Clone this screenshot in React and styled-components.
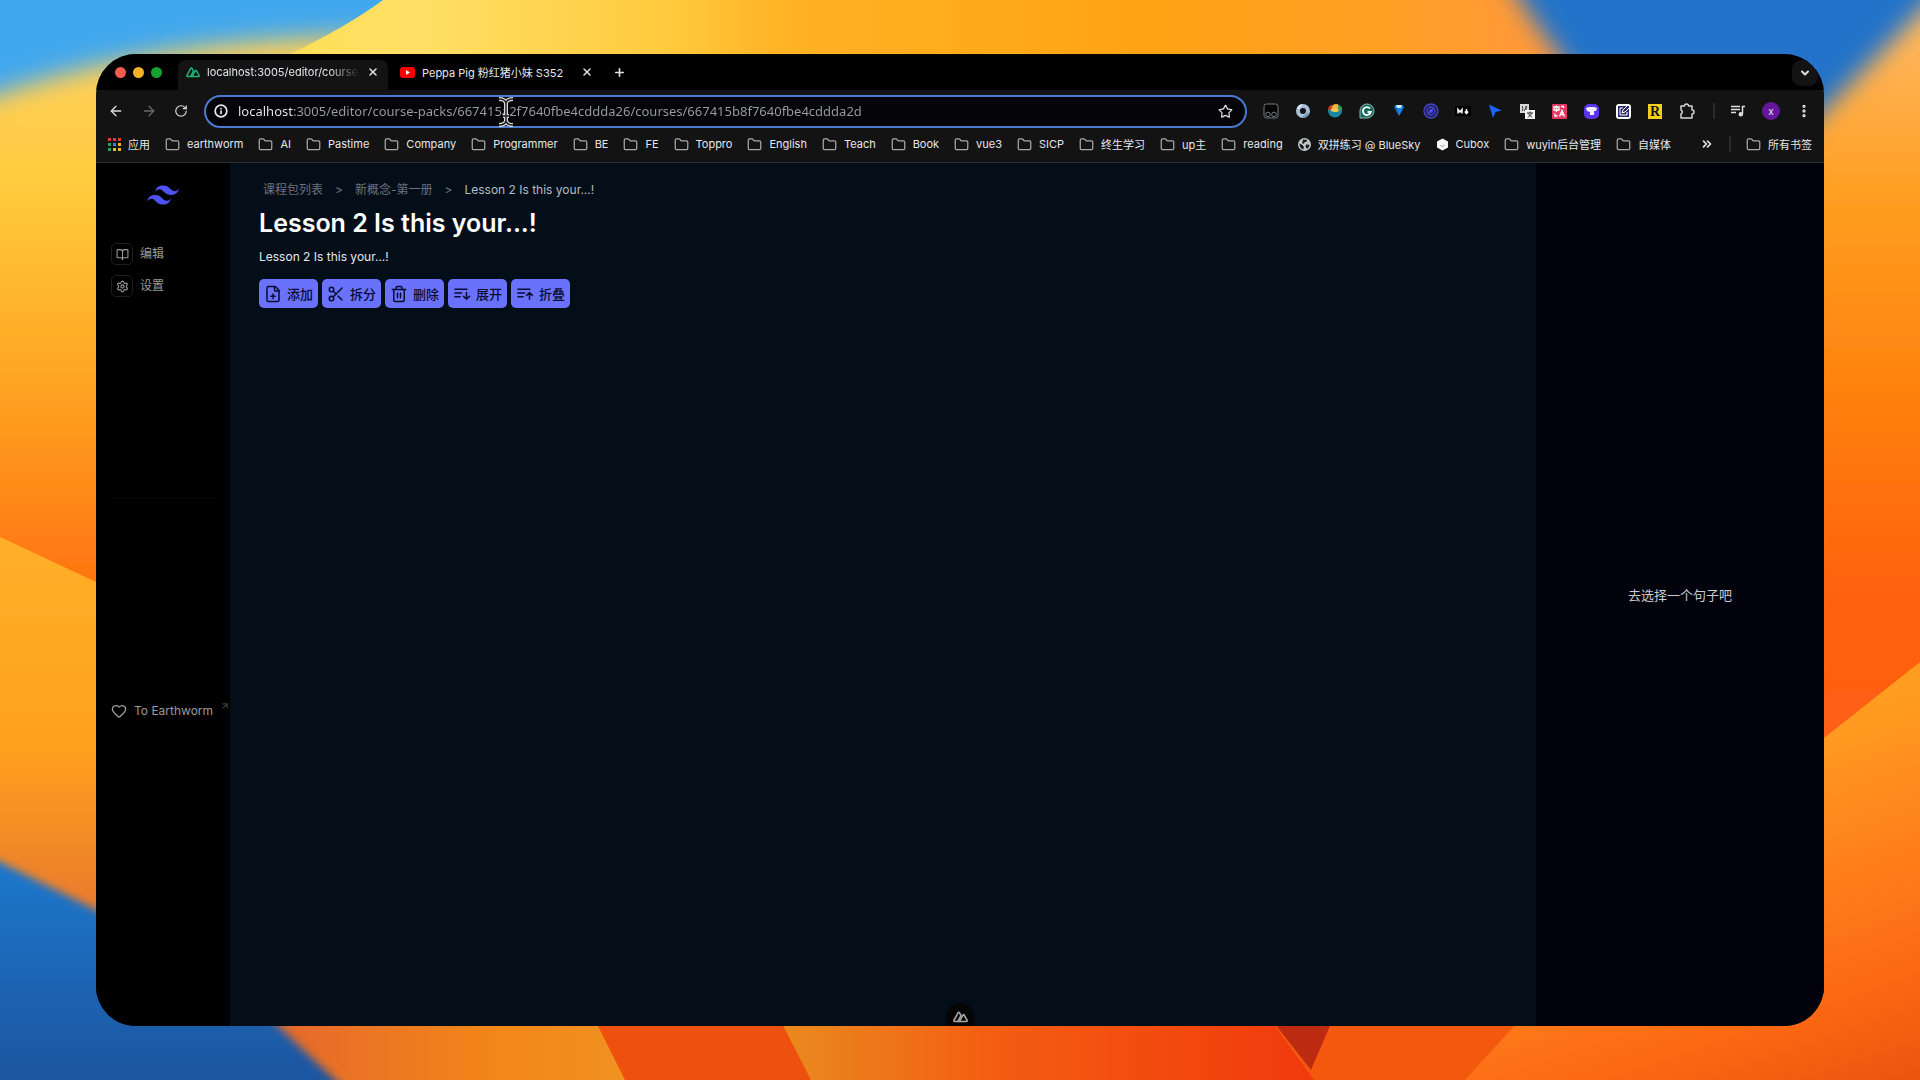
import { useState } from 'react'
import styled, { createGlobalStyle, css } from 'styled-components'
import {
    ArrowLeft,
    ArrowRight,
    ArrowUpRight,
    BookOpen,
    ChevronDown,
    ChevronsRight,
    EllipsisVertical,
    FilePlus,
    Folder,
    Heart,
    Info,
    Plus,
    RotateCw,
    Scissors,
    Settings,
    Star,
    Trash2,
    X,
} from 'lucide-react'

const URL =
    'localhost:3005/editor/course-packs/667415a2f7640fbe4cddda26/courses/667415b8f7640fbe4cddda2d'

const bookmarks = [
    { label: '应用', icon: 'apps' },
    { label: 'earthworm' },
    { label: 'AI' },
    { label: 'Pastime' },
    { label: 'Company' },
    { label: 'Programmer' },
    { label: 'BE' },
    { label: 'FE' },
    { label: 'Toppro' },
    { label: 'English' },
    { label: 'Teach' },
    { label: 'Book' },
    { label: 'vue3' },
    { label: 'SICP' },
    { label: '终生学习' },
    { label: 'up主' },
    { label: 'reading' },
    { label: '双拼练习 @ BlueSky', icon: 'globe' },
    { label: 'Cubox', icon: 'cubox' },
    { label: 'wuyin后台管理' },
    { label: '自媒体' },
]

const NuxtLogo = ({ size = 14, color = '#1fb573' }) => (
    <svg width={size} height={size} viewBox="0 0 14 14" fill="none" stroke={color} strokeWidth="1.5" strokeLinejoin="round" strokeLinecap="round">
        <path d="M5.4 11.6H1.5c-.6 0-.9-.6-.6-1.1L4.8 3.4c.3-.5.9-.5 1.2 0l1.5 2.7-3 5.4" />
        <path d="M5.4 11.6h7.1c.6 0 .9-.6.6-1.1l-2.7-4.9c-.3-.5-.8-.5-1.1 0l-3.1 5.6" />
    </svg>
)

const YoutubeLogo = () => (
    <svg width="15" height="12" viewBox="0 0 15 12">
        <rect width="15" height="11" y="1" rx="3" fill="#f00" />
        <path d="M6 4v5l4-2.500z" fill="#fff" />
    </svg>
)

const TailwindLogo = () => (
    <svg width="32" height="20" viewBox="0 4.800 24 14.400" fill="#4f52f5">
        <path d="M12 4.800c-3.200 0-5.200 1.600-6 4.800 1.200-1.600 2.600-2.200 4.200-1.800.913.228 1.565.89 2.288 1.624C13.666 10.618 15.027 12 18 12c3.200 0 5.200-1.600 6-4.800-1.200 1.600-2.600 2.200-4.200 1.800-.913-.228-1.565-.89-2.288-1.624C16.337 6.182 14.976 4.800 12 4.800zM6 12c-3.200 0-5.200 1.600-6 4.800 1.200-1.600 2.600-2.200 4.200-1.800.913.228 1.565.89 2.288 1.624 1.177 1.194 2.538 2.576 5.512 2.576 3.200 0 5.200-1.600 6-4.800-1.200 1.600-2.600 2.200-4.200 1.800-.913-.228-1.565-.89-2.288-1.624C10.337 13.382 8.976 12 6 12z" />
    </svg>
)

const SortIcon = ({ up }) => (
    <svg width="18" height="18" viewBox="0 0 24 24" fill="none" stroke="currentColor" strokeWidth="2" strokeLinecap="round" strokeLinejoin="round">
        <path d="M2.500 5.500h16M2.500 10.500h9M2.500 15.500h7" />
        <path d={up ? 'M18 19v-9m-4 4 4-4 4 4' : 'M18 10v9m-4-4 4 4 4-4'} />
    </svg>
)

const BookmarkIcon = ({ type }) => {
    if (type === 'apps') {
        const colors = ['#e8392c', '#e8392c', '#e8392c', '#2f9e57', '#3f7fe8', '#f0b429', '#2f9e57', '#f0b429', '#f0b429']
        return (
            <svg width="13" height="13" viewBox="0 0 13 13">
                {colors.map((c, i) => (
                    <rect key={i} x={(i % 3) * 5} y={Math.floor(i / 3) * 5} width="3" height="3" fill={c} />
                ))}
            </svg>
        )
    }
    if (type === 'globe') {
        return (
            <svg width="13" height="13" viewBox="0 0 13 13">
                <circle cx="6.500" cy="6.500" r="6.500" fill="#c3c5c8" />
                <path d="M1.500 5.500l3 1.500 1.500 2-.8 2.500C3 11 1.300 8.500 1.500 5.500zM5 1.500l4 .3-.5 2-2 .5-.5 1.500-2-.5zM8 6.500l3.500.3c-.2 1.800-1.200 3.200-2.500 4L7.500 9z" fill="#1c1c1c" />
            </svg>
        )
    }
    if (type === 'cubox') {
        return (
            <svg width="13" height="13" viewBox="0 0 13 13">
                <path d="M6.500.5l5.500 3v6l-5.500 3-5.500-3v-6z" fill="#f6f6f6" />
                <path d="M4.500 7.500l2 1 2-1.500" stroke="#999" fill="none" />
            </svg>
        )
    }
    return <Folder size={15} strokeWidth={2} color="#a9a9a9" />
}

const extensions = [
    {
        name: 'Tampermonkey',
        art: (
            <g fill="none" stroke="#77797b">
                <rect x="1" y="1" width="14" height="14" rx="2.500" fill="#060606" />
                <circle cx="5" cy="11.500" r="2.300" />
                <circle cx="11" cy="11.500" r="2.300" />
            </g>
        ),
    },
    {
        name: 'Proxy',
        art: (
            <g fill="none">
                <circle cx="8" cy="8" r="5" stroke="#a9bfd8" strokeWidth="4" />
                <path d="M3 6a5.500 5.500 0 0 1 4-4" stroke="#dce9f5" strokeWidth="2" />
                <path d="M13 10a5.500 5.500 0 0 1-5 4" stroke="#6c8db3" strokeWidth="2" />
            </g>
        ),
    },
    {
        name: 'Infinity',
        art: (
            <g>
                <path d="M1 7h14a7 7 0 0 1-14 1z" fill="#1887a0" />
                <path d="M1 7c0-3 2-5 4-5.500L7 7z" fill="#d83b2c" />
                <circle cx="9" cy="5" r="4" fill="#f6b13c" />
                <path d="M11 2l4 2v4h-4z" fill="#2c9e56" />
                <path d="M4 8c3 1.500 6 1.500 8-1l-3-2-5 1z" fill="#f7c452" />
            </g>
        ),
    },
    {
        name: 'Grammarly',
        art: (
            <g fill="none">
                <path d="M1 15V8a7 7 0 1 1 7 7z" fill="#11695b" stroke="#8fbdb3" />
                <path d="M11 5.500A4 4 0 1 0 11.800 9H8.500" stroke="#fff" strokeWidth="1.800" />
            </g>
        ),
    },
    {
        name: 'Gem',
        art: (
            <g>
                <path d="M3 4l2-2h6l2 2-5 9z" fill="#1284e8" />
                <path d="M5 2h6l-1 3H6z" fill="#c9ecff" />
                <path d="M3 4l3 1 2 8z" fill="#075ab5" />
            </g>
        ),
    },
    {
        name: 'Compass',
        art: (
            <g fill="none" stroke="#4548c4" strokeWidth="1.300">
                <circle cx="8" cy="8" r="7" fill="#1d1f5c" />
                <circle cx="8" cy="8" r="4" />
                <path d="M6 10l1-3 3-1-1 3z" fill="#6568e8" />
            </g>
        ),
    },
    {
        name: 'Markdown',
        art: (
            <g fill="none" stroke="#fff" strokeWidth="1.500">
                <rect x="0" y="3" width="16" height="10" fill="#000" stroke="none" />
                <path d="M3 10.500v-4l2 2.500 2-2.500v4M11.500 6v4M9.800 8.500l1.700 2 1.700-2" />
            </g>
        ),
    },
    { name: 'Pointer', art: <path d="M2 1.500l12.500 6-6 1.500-2.500 6z" fill="#1668ff" /> },
    {
        name: 'Translate page',
        art: (
            <g fill="none">
                <rect x="1" y="1" width="9" height="9" fill="#d9d9d9" />
                <path d="M3 8c1-1 1-4 0-5M5 8l3-5M7 3v5" stroke="#3a3a3a" />
                <rect x="6" y="7" width="10" height="9" fill="#f5f5f5" />
                <path d="M8 10h6M11 8.500V10M9 14.500l4-4M9 10.500l4 4" stroke="#222" />
            </g>
        ),
    },
    {
        name: 'Immersive translate',
        art: (
            <g fill="none" stroke="#fff" strokeWidth="1.300">
                <rect x="1" y="1" width="15" height="15" rx="1" fill="#e33a62" stroke="none" />
                <path d="M3 4h5v3H3zM5.500 2.500V9M8.500 13.500l2.500-6 2.500 6M9.500 11.500h3M10 3.500h2.500V5M4 10.500V13h2.500" />
            </g>
        ),
    },
    {
        name: 'Shirt',
        art: (
            <g>
                <rect x="1" y="1" width="15" height="15" rx="5" fill="#5b34f0" />
                <path d="M3 5l3-1h5l3 1-1 3h-2v4H7V9L4 8z" fill="#f2efff" />
            </g>
        ),
    },
    {
        name: 'Note',
        art: (
            <g fill="none">
                <rect x="1" y="1" width="15" height="15" rx="3" fill="#fff" />
                <path d="M3 3h11v11H3z" fill="#2c2870" />
                <path d="M8 5H5v7h7V9" stroke="#fff" />
                <path d="M7 10l1-3 5-5 2 2-5 5z" fill="#2c2870" stroke="#fff" />
            </g>
        ),
    },
    {
        name: 'Raindrop',
        art: (
            <g>
                <rect x="1" y="1" width="14" height="15" fill="#f5d118" />
                <text x="8" y="13" textAnchor="middle" fontFamily="Liberation Serif, serif" fontWeight="700" fontSize="14" fill="#111">R</text>
            </g>
        ),
    },
    {
        name: 'Extensions',
        art: (
            <path d="M2 3h3.500a2 2 0 1 1 4 0H13v4a2 2 0 1 1 0 4v4H2v-4a2.200 2.200 0 0 0 0-4z" fill="none" stroke="#d5d5d5" strokeWidth="1.500" strokeLinejoin="round" />
        ),
    },
]

const actions = [
    { label: '添加', icon: <FilePlus size={18} strokeWidth={2} /> },
    { label: '拆分', icon: <Scissors size={18} strokeWidth={2} /> },
    { label: '删除', icon: <Trash2 size={18} strokeWidth={2} /> },
    { label: '展开', icon: <SortIcon /> },
    { label: '折叠', icon: <SortIcon up /> },
]

const Wallpaper = () => (
    <StyledWallpaper viewBox="0 0 1920 1080" preserveAspectRatio="none" aria-hidden="true">
        <defs>
            <linearGradient id="top" x1="288" x2="1580" y1="0" y2="0" gradientUnits="userSpaceOnUse">
                <stop offset="0" stopColor="#ffdf58" />
                <stop offset="0.100" stopColor="#ffe066" />
                <stop offset="0.300" stopColor="#ffc93c" />
                <stop offset="0.380" stopColor="#ffb325" />
                <stop offset="0.650" stopColor="#ffa313" />
                <stop offset="0.850" stopColor="#ffa024" />
                <stop offset="1" stopColor="#ff9640" />
            </linearGradient>
            <linearGradient id="left" x1="0" x2="0" y1="90" y2="580" gradientUnits="userSpaceOnUse">
                <stop offset="0" stopColor="#ffcf55" />
                <stop offset="0.200" stopColor="#ffcb3c" />
                <stop offset="0.550" stopColor="#ffa924" />
                <stop offset="1" stopColor="#ff7510" />
            </linearGradient>
            <linearGradient id="leftLow" x1="0" x2="0" y1="540" y2="920" gradientUnits="userSpaceOnUse">
                <stop offset="0" stopColor="#ffb028" />
                <stop offset="0.550" stopColor="#ffa01c" />
                <stop offset="1" stopColor="#e8782f" />
            </linearGradient>
            <linearGradient id="blueLow" x1="0" x2="0" y1="860" y2="1080" gradientUnits="userSpaceOnUse">
                <stop offset="0" stopColor="#1d78cc" />
                <stop offset="1" stopColor="#1c55a0" />
            </linearGradient>
            <linearGradient id="petalA" x1="280" x2="620" y1="0" y2="0" gradientUnits="userSpaceOnUse">
                <stop offset="0" stopColor="#e5692c" />
                <stop offset="0.650" stopColor="#f38718" />
                <stop offset="1" stopColor="#f09120" />
            </linearGradient>
            <linearGradient id="petalB" x1="783" x2="1310" y1="0" y2="0" gradientUnits="userSpaceOnUse">
                <stop offset="0" stopColor="#e98a1e" />
                <stop offset="0.400" stopColor="#f45d12" />
                <stop offset="1" stopColor="#f03a0c" />
            </linearGradient>
            <linearGradient id="right" x1="0" x2="0" y1="20" y2="730" gradientUnits="userSpaceOnUse">
                <stop offset="0" stopColor="#ffb861" />
                <stop offset="0.250" stopColor="#ff9e20" />
                <stop offset="0.500" stopColor="#ff840f" />
                <stop offset="0.800" stopColor="#ff620b" />
                <stop offset="1" stopColor="#ff5e14" />
            </linearGradient>
            <linearGradient id="rightLow" x1="1824" x2="1949" y1="720" y2="1084" gradientUnits="userSpaceOnUse">
                <stop offset="0" stopColor="#ff9d20" />
                <stop offset="0.450" stopColor="#ff7a1a" />
                <stop offset="0.700" stopColor="#fb6812" />
                <stop offset="1" stopColor="#e8520f" />
            </linearGradient>
            <filter id="soft" x="-20%" y="-20%" width="140%" height="140%">
                <feGaussianBlur stdDeviation="12" />
            </filter>
            <filter id="softer" x="-5%" y="-20%" width="110%" height="140%">
                <feGaussianBlur stdDeviation="4" />
            </filter>
        </defs>
        <rect width="1920" height="1080" fill="#42a8ee" />
        <path d="M-60 115C60 70 180 35 420 35V700H-60z" fill="url(#left)" filter="url(#soft)" />
        <path d="M0 537l96 45 104 48v450H0z" fill="url(#leftLow)" />
        <path d="M383 0Q345 28 286 56L200 100V300H1700V0z" fill="url(#top)" />
        <path d="M1490-60Q1515 10 1630 140H1980V-60z" fill="#2073c9" filter="url(#soft)" />
        <path d="M1990-60L1920 12 1800 135V820H1990z" fill="url(#right)" filter="url(#soft)" />
        <path d="M240 1000h620v80H240z" fill="url(#petalA)" />
        <path d="M-60 830L0 862l96 48 150 70 32 46 95 90H-60z" fill="url(#blueLow)" filter="url(#softer)" />
        <path d="M585 1000l40 80h220v-80z" fill="#ee5010" />
        <path d="M770 1000l41 80h520v-80z" fill="url(#petalB)" />
        <path d="M1256 1000l58 80h300v-80z" fill="#f4580f" />
        <path d="M1256 1000l55 70 30-70z" fill="#bd2a12" />
        <path d="M1538 1000L1800 757l120-95v418h-455z" fill="url(#rightLow)" />
    </StyledWallpaper>
)

const TabStrip = () => (
    <StyledTabStrip>
        <Lights>
            <Light type="button" aria-label="Close window" $color="#f55a4e" />
            <Light type="button" aria-label="Minimise window" $color="#f5b125" />
            <Light type="button" aria-label="Zoom window" $color="#16a22e" />
        </Lights>
        <Tab $active>
            <NuxtLogo />
            <TabTitle $fade>localhost:3005/editor/course-</TabTitle>
            <IconButton type="button" aria-label="Close tab">
                <X size={12} strokeWidth={3} />
            </IconButton>
        </Tab>
        <Tab>
            <YoutubeLogo />
            <TabTitle>Peppa Pig 粉红猪小妹 S352</TabTitle>
            <IconButton type="button" aria-label="Close tab">
                <X size={12} strokeWidth={3} />
            </IconButton>
        </Tab>
        <NewTab type="button" aria-label="New tab">
            <Plus size={13} strokeWidth={3} />
        </NewTab>
        <TabSearch type="button" aria-label="Search tabs">
            <ChevronDown size={12} strokeWidth={4} />
        </TabSearch>
    </StyledTabStrip>
)

const Toolbar = () => {
    const [address, setAddress] = useState(URL)
    return (
        <StyledToolbar>
            <NavButtons>
                <IconButton type="button" aria-label="Back">
                    <ArrowLeft size={16} />
                </IconButton>
                <IconButton type="button" aria-label="Forward" $dim>
                    <ArrowRight size={16} />
                </IconButton>
                <IconButton type="button" aria-label="Reload">
                    <RotateCw size={14} strokeWidth={2} />
                </IconButton>
            </NavButtons>
            <Omnibox>
                <Info size={14} strokeWidth={3} />
                <input aria-label="Address" spellCheck="false" value={address} onChange={(e) => setAddress(e.target.value)} />
                <IconButton type="button" aria-label="Bookmark this page">
                    <Star size={15} />
                </IconButton>
                <TextCursor width="18" height="30" viewBox="0 0 18 30" fill="none">
                    <path d="M2 2q6 0 7 4 1-4 7-4M2 28q6 0 7-4 1 4 7 4M9 6v18M6 19h6" stroke="#d8d8d8" strokeWidth="4" />
                    <path d="M2 2q6 0 7 4 1-4 7-4M2 28q6 0 7-4 1 4 7 4M9 6v18M6 19h6" stroke="#222" strokeWidth="1.500" />
                </TextCursor>
            </Omnibox>
            <Extensions>
                {extensions.map((ext) => (
                    <IconButton key={ext.name} type="button" aria-label={ext.name}>
                        <svg width="17" height="17" viewBox="0 0 17 17">
                            {ext.art}
                        </svg>
                    </IconButton>
                ))}
            </Extensions>
            <Divider />
            <ProfileArea>
                <IconButton type="button" aria-label="Media controls">
                    <svg width="16" height="16" viewBox="0 0 16 16" fill="none" stroke="currentColor" strokeWidth="1.500">
                        <path d="M1 3.500h9M1 6.500h9M1 9.500h5M12.500 11V3.500H15" />
                        <circle cx="10.800" cy="11.300" r="1.500" fill="currentColor" />
                    </svg>
                </IconButton>
                <Avatar type="button">x</Avatar>
                <IconButton type="button" aria-label="Menu">
                    <EllipsisVertical size={16} strokeWidth={3} />
                </IconButton>
            </ProfileArea>
        </StyledToolbar>
    )
}

const BookmarkBar = () => (
    <StyledBookmarkBar>
        {bookmarks.map((b) => (
            <Bookmark href="#" key={b.label}>
                <BookmarkIcon type={b.icon} />
                {b.label}
            </Bookmark>
        ))}
        <BookmarkEnd>
            <IconButton type="button" aria-label="More bookmarks">
                <ChevronsRight size={14} strokeWidth={3} />
            </IconButton>
            <Divider />
            <Bookmark href="#">
                <BookmarkIcon />
                所有书签
            </Bookmark>
        </BookmarkEnd>
    </StyledBookmarkBar>
)

const App = () => (
    <Desktop>
        <GlobalStyle />
        <Wallpaper />
        <Browser>
            <TabStrip />
            <Toolbar />
            <BookmarkBar />
            <Page>
                <Sidebar>
                    <Logo href="#" aria-label="Home">
                        <TailwindLogo />
                    </Logo>
                    <Menu>
                        <MenuLink href="#">
                            <span>
                                <BookOpen size={13} strokeWidth={2} />
                            </span>
                            编辑
                        </MenuLink>
                        <MenuLink href="#">
                            <span>
                                <Settings size={13} strokeWidth={2} />
                            </span>
                            设置
                        </MenuLink>
                    </Menu>
                    <SidebarFoot>
                        <OutLink href="#">
                            <Heart size={16} strokeWidth={2} />
                            To Earthworm
                            <ArrowUpRight className="out" size={10} strokeWidth={2} />
                        </OutLink>
                    </SidebarFoot>
                </Sidebar>
                <Main>
                    <Breadcrumb>
                        <a href="#">课程包列表</a>
                        <span>&gt;</span>
                        <a href="#">新概念-第一册</a>
                        <span>&gt;</span>
                        <strong>Lesson 2 Is this your...!</strong>
                    </Breadcrumb>
                    <Title>Lesson 2 Is this your...!</Title>
                    <Subtitle>Lesson 2 Is this your...!</Subtitle>
                    <Actions>
                        {actions.map((a) => (
                            <ActionButton type="button" key={a.label}>
                                {a.icon}
                                {a.label}
                            </ActionButton>
                        ))}
                    </Actions>
                </Main>
                <Detail>去选择一个句子吧</Detail>
            </Page>
            <Devtools type="button" aria-label="Nuxt DevTools">
                <NuxtLogo size={15} color="#a5a5a5" />
            </Devtools>
        </Browser>
    </Desktop>
)

const GlobalStyle = createGlobalStyle`
    *, *::before, *::after {
        box-sizing: border-box;
    }
    body {
        margin: 0;
        background: #000;
        font-family: Inter, 'Noto Sans CJK SC', sans-serif;
        font-size: 13px;
        color: #e5e7eb;
    }
    button, input {
        font: inherit;
        color: inherit;
        background: none;
        border: 0;
        padding: 0;
    }
    a {
        color: inherit;
        text-decoration: none;
    }
    svg {
        flex: none;
    }
`

const Desktop = styled.div`
    position: relative;
    display: flex;
    min-height: 100vh;
    padding: 5vh 5vw;
    overflow: hidden;
`

const StyledWallpaper = styled.svg`
    position: absolute;
    inset: 0;
    width: 100%;
    height: 100%;
`

const Browser = styled.div`
    position: relative;
    flex: 1;
    min-width: 0;
    display: flex;
    flex-direction: column;
    overflow: hidden;
    background: #131313;
    border-radius: 40px;
`

const IconButton = styled.button`
    display: flex;
    align-items: center;
    justify-content: center;
    color: ${({ $dim }) => ($dim ? '#6a6a6a' : '#dedede')};
`

const StyledTabStrip = styled.div`
    display: flex;
    align-items: stretch;
    height: 36px;
    padding: 6px 6px 0 19px;
    background: #000;
`

const Lights = styled.div`
    display: flex;
    align-items: center;
    gap: 7px;
    margin-right: 16px;
    padding-bottom: 6px;
`

const Light = styled.button`
    width: 11px;
    height: 11px;
    border-radius: 50%;
    background: ${({ $color }) => $color};
`

const Tab = styled.div`
    display: flex;
    align-items: center;
    gap: 7px;
    width: 210px;
    padding: 0 9px 6px 8px;
    font-size: 11px;

    ${({ $active }) =>
        $active
            ? css`
                  background: #131313;
                  border-radius: 8px 8px 0 0;
              `
            : css`
                  width: 216px;
                  padding-left: 12px;
                  padding-right: 11px;
              `}
`

const TabTitle = styled.span`
    flex: 1;
    min-width: 0;
    overflow: hidden;
    white-space: nowrap;
    ${({ $fade }) =>
        $fade &&
        css`
            mask-image: linear-gradient(90deg, #000 80%, transparent);
        `}
`

const NewTab = styled(IconButton)`
    width: 30px;
    padding-bottom: 6px;
`

const TabSearch = styled(IconButton)`
    width: 26px;
    height: 26px;
    margin-left: auto;
    border-radius: 9px;
    background: #131313;
`

const StyledToolbar = styled.div`
    display: flex;
    align-items: center;
    height: 42px;
    padding: 0 12px;
`

const NavButtons = styled.div`
    display: flex;
    gap: 17px;
    margin-right: 16px;
`

const Omnibox = styled.div`
    position: relative;
    flex: 1;
    min-width: 0;
    display: flex;
    align-items: center;
    gap: 10px;
    height: 33px;
    padding: 0 12px 0 8px;
    background: #050508;
    border: 2px solid #4a7bd0;
    border-radius: 17px;

    input {
        flex: 1;
        min-width: 0;
        outline: 0;
        font-family: 'Noto Sans', sans-serif;
        background: linear-gradient(90deg, #e8eaed 55px, #9a9da1 55px);
        background-clip: text;
        color: transparent;
    }
`

const TextCursor = styled.svg`
    position: absolute;
    left: 291px;
    top: 0;
`

const Extensions = styled.div`
    display: flex;
    gap: 15px;
    margin: 0 17px 0 16px;
`

const Divider = styled.span`
    width: 2px;
    height: 16px;
    background: #2a2a2a;
`

const ProfileArea = styled.div`
    display: flex;
    align-items: center;
    gap: 16px;
    margin-left: 15px;
`

const Avatar = styled.button`
    width: 18px;
    height: 18px;
    border-radius: 50%;
    background: #65179c;
    font-size: 10px;
    line-height: 18px;
`

const StyledBookmarkBar = styled.nav`
    display: flex;
    align-items: center;
    gap: 15px;
    height: 31px;
    padding: 0 12px 6px;
    border-bottom: 1px solid #2a3038;
    overflow: hidden;
    white-space: nowrap;
`

const Bookmark = styled.a`
    display: flex;
    align-items: center;
    gap: 7px;
    font-size: 11px;
`

const BookmarkEnd = styled.div`
    display: flex;
    align-items: center;
    gap: 15px;
    margin-left: auto;
`

const Page = styled.div`
    flex: 1;
    display: flex;
    background: #040e18;
`

const Sidebar = styled.aside`
    display: flex;
    flex-direction: column;
    width: 134px;
    padding: 22px 15px 0;
    background: #000;
    color: #9b9b9b;
`

const Logo = styled.a`
    align-self: center;
    display: flex;
    margin-bottom: 38px;
`

const Menu = styled.nav`
    display: flex;
    flex-direction: column;
    gap: 10px;
    min-height: 256px;
    border-bottom: 1px solid #080808;
`

const MenuLink = styled.a`
    display: flex;
    align-items: center;
    gap: 7px;
    font-size: 12px;
    line-height: 22px;

    span {
        display: flex;
        align-items: center;
        justify-content: center;
        width: 22px;
        height: 22px;
        border: 1px solid #1f1f1f;
        border-radius: 5px;
    }
`

const SidebarFoot = styled.div`
    padding-top: 202px;
`

const OutLink = styled.a`
    display: flex;
    align-items: center;
    gap: 7px;
    line-height: 20px;
    font-size: 12px;
    white-space: nowrap;

    .out {
        align-self: flex-start;
        opacity: 0.6;
    }
`

const Main = styled.main`
    flex: 1;
    min-width: 0;
    padding: 17px 29px;
`

const Breadcrumb = styled.nav`
    display: flex;
    gap: 12px;
    padding-left: 4px;
    font-size: 12px;
    line-height: 20px;
    color: #6b7280;

    strong {
        font-weight: 400;
        color: #b4bac4;
    }
`

const Title = styled.h1`
    margin: 7px 0 8px;
    font-size: 25px;
    line-height: 32px;
    font-weight: 600;
    color: #fff;
`

const Subtitle = styled.p`
    margin: 0 0 12px;
    font-size: 12px;
    line-height: 20px;
`

const Actions = styled.div`
    display: flex;
    gap: 4px;
`

const ActionButton = styled.button`
    display: flex;
    align-items: center;
    gap: 5px;
    height: 29px;
    padding: 0 5px;
    border-radius: 5px;
    background: #6a72fb;
    color: #070c33;
    font-weight: 500;
`

const Devtools = styled.button`
    position: absolute;
    bottom: 0;
    left: 50%;
    width: 28px;
    height: 23px;
    margin-left: -14px;
    padding-top: 6px;
    border-radius: 14px 14px 0 0;
    background: #050505;
`

const Detail = styled.aside`
    display: flex;
    align-items: center;
    justify-content: center;
    width: 288px;
    background: #02020d;
    color: #c9cbd3;
`

export default App
